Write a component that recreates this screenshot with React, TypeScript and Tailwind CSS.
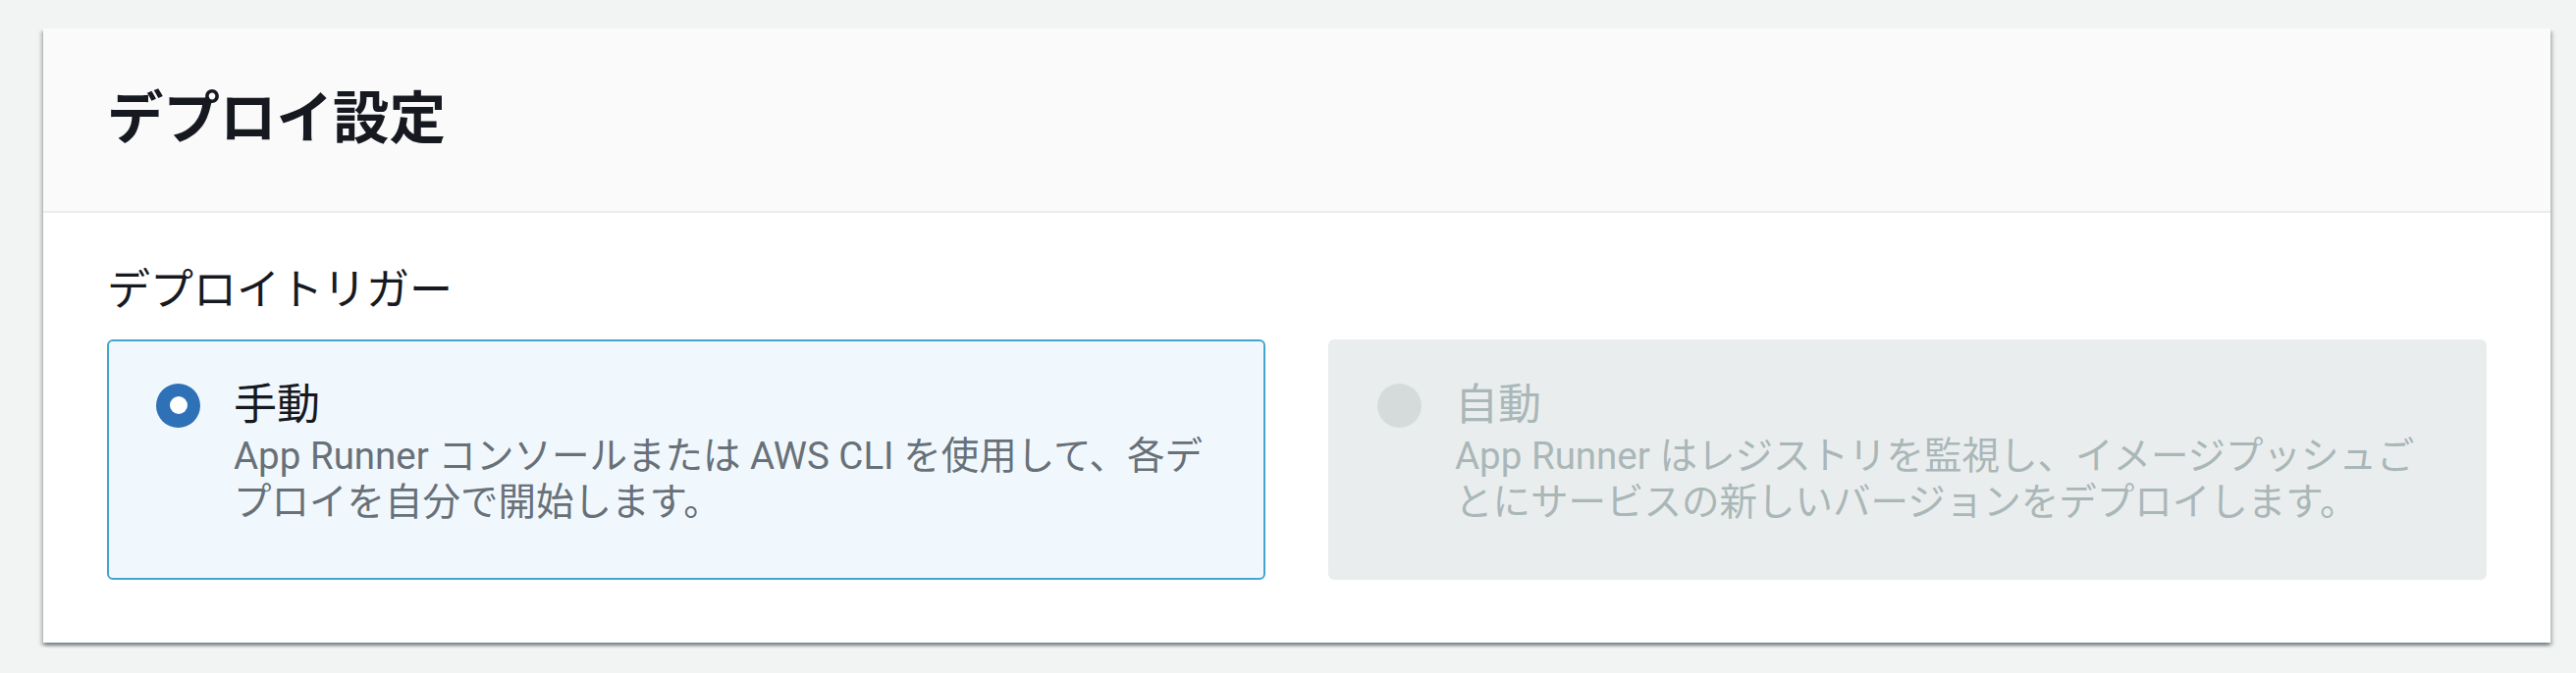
const font = {
  fontFamily: '"Roboto", "Noto Sans CJK JP", sans-serif',
};

type TileProps = {
  label: string;
  lines: string[];
  checked?: boolean;
  disabled?: boolean;
};

const RadioTile = ({ label, lines, checked, disabled }: TileProps) => {
  return (
    <div
      className={
        disabled
          ? "flex items-start gap-[34px] rounded-[6px] border-2 border-[#eaeded] bg-[#eaeded] pl-[48px] pr-[36px] pt-[37px] pb-[54px]"
          : "flex items-start gap-[34px] rounded-[6px] border-2 border-[#44a5cd] bg-[#f1f8fd] pl-[48px] pr-[36px] pt-[37px] pb-[54px]"
      }
    >
      {/* radio */}
      <div className="flex h-[56px] items-center">
        {checked ? (
          <span className="flex h-[45px] w-[45px] items-center justify-center rounded-full bg-[#2f71b7]">
            <span className="h-[18px] w-[18px] rounded-full bg-white" />
          </span>
        ) : (
          <span className="h-[45px] w-[45px] rounded-full bg-[#d5dbdb]" />
        )}
      </div>
      <div className="flex flex-col">
        <span
          className={
            disabled
              ? "text-[44px] leading-[56px] text-[#aab7b8]"
              : "text-[44px] leading-[56px] text-[#16191f]"
          }
        >
          {label}
        </span>
        <span
          className={
            disabled
              ? "text-[38.5px] leading-[47px] text-[#aab7b8]"
              : "text-[38.5px] leading-[47px] text-[#687078]"
          }
        >
          {lines[0]}
          <br />
          {lines[1]}
        </span>
      </div>
    </div>
  );
};

export default function App() {
  return (
    <div
      className="min-h-[686px] bg-[#f2f3f3] pl-[44px] pr-[26px] pt-[29px]"
      style={font}
    >
      <div className="bg-white shadow-[0_3px_3px_0_rgba(0,28,36,0.3),3px_3px_3px_0_rgba(0,28,36,0.15),-3px_3px_3px_0_rgba(0,28,36,0.15)]">
        {/* header */}
        <div className="flex h-[188px] items-center border-b-2 border-[#eaeded] bg-[#fafafa] px-[65px]">
          <h2 className="text-[57.5px] font-bold leading-[72px] text-[#16191f]">
            デプロイ設定
          </h2>
        </div>
        {/* body */}
        <div className="flex flex-col gap-[22px] px-[65px] pt-[51px] pb-[64px]">
          <span className="text-[44px] leading-[56px] text-[#16191f]">
            デプロイトリガー
          </span>
          <div className="grid grid-cols-2 gap-[64px]">
            <RadioTile
              checked
              label="手動"
              lines={[
                "App Runner コンソールまたは AWS CLI を使用して、各デ",
                "プロイを自分で開始します。",
              ]}
            />
            <RadioTile
              disabled
              label="自動"
              lines={[
                "App Runner はレジストリを監視し、イメージプッシュご",
                "とにサービスの新しいバージョンをデプロイします。",
              ]}
            />
          </div>
        </div>
      </div>
    </div>
  );
}
